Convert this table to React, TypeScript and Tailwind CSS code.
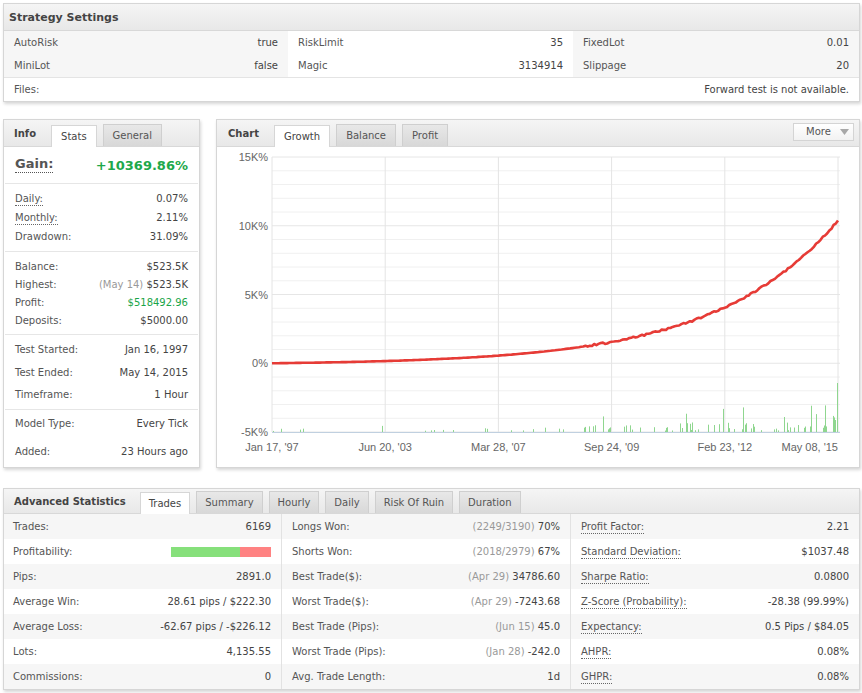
import React from "react";

function lcg(seed: number) {
  let s = seed >>> 0;
  return () => {
    s = (Math.imul(s, 1664525) + 1013904223) >>> 0;
    return s / 4294967296;
  };
}

const PL = 55;
const PR = 621;
const PT = 10;
const PB = 285;
const ZERO = 216.25;
const K = 4.6;

const curve = (() => {
  const pts: string[] = [];
  const n = 260;
  const rnd = lcg(7);
  for (let i = 0; i <= n; i++) {
    const t = i / n;
    const v = (10369 * (Math.exp(K * t) - 1)) / (Math.exp(K) - 1);
    const jitter = t > 0.55 ? (rnd() - 0.5) * 1.8 : 0;
    const y = ZERO - (v * 68.75) / 5000 + jitter;
    const x = PL + t * (PR - PL);
    pts.push(`${x.toFixed(1)},${y.toFixed(1)}`);
  }
  return pts.join(" ");
})();

const bars = (() => {
  const rnd = lcg(12345);
  const out: { x: number; h: number }[] = [];
  for (let x = PL + 1; x < PR; x += 1) {
    const t = (x - PL) / (PR - PL);
    const r = rnd();
    let p = 0.05;
    let maxH = 3;
    if (t > 0.3) {
      p = 0.12;
      maxH = 4;
    }
    if (t > 0.55) {
      p = 0.18;
      maxH = 6;
    }
    if (t > 0.72) {
      p = 0.32;
      maxH = 9;
    }
    if (r < p) {
      let h = 1 + rnd() * maxH;
      const q = rnd();
      if (t > 0.72 && q < 0.2) h = 12 + rnd() * 22;
      else if (t > 0.5 && q < 0.08) h = 6 + rnd() * 10;
      else if (q < 0.04) h = 4 + rnd() * 6;
      out.push({ x, h });
    }
  }
  out.push({ x: PR - 1, h: 49 });
  out.push({ x: PR - 3, h: 12 });
  out.push({ x: PR - 5, h: 11 });
  return out;
})();

function Chart() {
  const vlines = [0, 1, 2, 3, 4, 5].map((k) => PL + k * ((PR - PL) / 5));
  const hlines = Array.from({ length: 21 }, (_, i) => PT + i * 13.75);
  const ylabels = ["15K%", "10K%", "5K%", "0%", "-5K%"];
  const xlabels = ["Jan 17, '97", "Jun 20, '03", "Mar 28, '07", "Sep 24, '09", "Feb 23, '12"];
  return (
    <svg width="642" height="320" viewBox="0 0 642 320" className="block">
      {hlines.map((y, i) => (
        <line key={"h" + i} x1={PL} x2={PR + 2} y1={y} y2={y} stroke={i % 5 === 0 ? "#e6e6e6" : "#f0f0f0"} strokeWidth="1" />
      ))}
      {vlines.map((x, i) => (
        <line key={"v" + i} x1={x} x2={x} y1={PT} y2={PB} stroke="#e4e4e4" strokeWidth="1" />
      ))}
      {bars.map((b, i) => (
        <line key={"b" + i} x1={b.x + 0.5} x2={b.x + 0.5} y1={PB} y2={PB - b.h} stroke="#8fd68f" strokeWidth="1" />
      ))}
      <line x1={PL} x2={PR + 2} y1={PB + 0.5} y2={PB + 0.5} stroke="#c0d0e0" strokeWidth="1" />
      <polyline points={curve} fill="none" stroke="#e63b36" strokeWidth="2.6" strokeLinejoin="round" />
      {ylabels.map((l, i) => (
        <text key={l} x={51} y={PT + i * 68.75 + 4} textAnchor="end" fontFamily="'Liberation Sans', Arial, sans-serif" fontSize="11" fill="#666">
          {l}
        </text>
      ))}
      {xlabels.map((l, i) => (
        <text key={l} x={vlines[i]} y={304} textAnchor="middle" fontFamily="'Liberation Sans', Arial, sans-serif" fontSize="11" fill="#666">
          {l}
        </text>
      ))}
      <text x={PR} y={304} textAnchor="end" fontFamily="'Liberation Sans', Arial, sans-serif" fontSize="11" fill="#666">
        May 08, '15
      </text>
    </svg>
  );
}

function Tab({ label, active }: { label: string; active?: boolean }) {
  return active ? (
    <div className="h-[22px] -mb-px px-[9px] flex items-center bg-white border border-b-0 border-[#d6d6d6] text-[#444]">
      {label}
    </div>
  ) : (
    <div className="h-[22px] px-[9px] flex items-center bg-linear-to-b from-[#e8e8e8] to-[#d8d8d8] border border-b-0 border-[#cfcfcf] text-[#555]">
      {label}
    </div>
  );
}

function BTab({ label, active }: { label: string; active?: boolean }) {
  return active ? (
    <div className="h-[22px] -mb-px px-[8px] flex items-center bg-white border border-b-0 border-[#d6d6d6] text-[#444]">
      {label}
    </div>
  ) : (
    <div className="h-[22px] px-[8px] flex items-center bg-linear-to-b from-[#e8e8e8] to-[#d8d8d8] border border-b-0 border-[#cfcfcf] text-[#555]">
      {label}
    </div>
  );
}

function SRow({ label, value }: { label: string; value: string }) {
  return (
    <div className="h-[23px] flex items-center justify-between px-[10px]">
      <span className="text-[#555]">{label}</span>
      <span className="text-[#444]">{value}</span>
    </div>
  );
}

function Dot({ children }: { children: React.ReactNode }) {
  return <span className="border-b border-dotted border-[#666] pb-[1px]">{children}</span>;
}

type Cell = { label: React.ReactNode; value: React.ReactNode };

const muted = (s: string) => <span className="text-[#999]">{s}</span>;

const statRows: Cell[][] = [
  [
    { label: "Trades:", value: "6169" },
    { label: "Longs Won:", value: <>{muted("(2249/3190)")} 70%</> },
    { label: <Dot>Profit Factor:</Dot>, value: "2.21" },
  ],
  [
    {
      label: "Profitability:",
      value: (
        <span className="flex w-[100px] h-[10px]">
          <span className="w-[69px] bg-[#86e07b]" />
          <span className="flex-1 bg-[#ff8282]" />
        </span>
      ),
    },
    { label: "Shorts Won:", value: <>{muted("(2018/2979)")} 67%</> },
    { label: <Dot>Standard Deviation:</Dot>, value: "$1037.48" },
  ],
  [
    { label: "Pips:", value: "2891.0" },
    { label: "Best Trade($):", value: <>{muted("(Apr 29)")} 34786.60</> },
    { label: <Dot>Sharpe Ratio:</Dot>, value: "0.0800" },
  ],
  [
    { label: "Average Win:", value: "28.61 pips / $222.30" },
    { label: "Worst Trade($):", value: <>{muted("(Apr 29)")} -7243.68</> },
    { label: <Dot>Z-Score (Probability):</Dot>, value: "-28.38 (99.99%)" },
  ],
  [
    { label: "Average Loss:", value: "-62.67 pips / -$226.12" },
    { label: "Best Trade (Pips):", value: <>{muted("(Jun 15)")} 45.0</> },
    { label: <Dot>Expectancy:</Dot>, value: "0.5 Pips / $84.05" },
  ],
  [
    { label: "Lots:", value: "4,135.55" },
    { label: "Worst Trade (Pips):", value: <>{muted("(Jan 28)")} -242.0</> },
    { label: <Dot>AHPR:</Dot>, value: "0.08%" },
  ],
  [
    { label: "Commissions:", value: "0" },
    { label: "Avg. Trade Length:", value: "1d" },
    { label: <Dot>GHPR:</Dot>, value: "0.08%" },
  ],
];

function IRow({ label, value, cls }: { label: React.ReactNode; value: React.ReactNode; cls: string }) {
  return (
    <div className={`flex items-center justify-between ${cls}`}>
      <span className="text-[#555]">{label}</span>
      <span className="text-[#444]">{value}</span>
    </div>
  );
}

export default function App() {
  return (
    <div className="w-[862px] h-[693px] bg-white pt-[3px] pl-[3px] font-['DejaVu_Sans',sans-serif] text-[10px] leading-none">
      {/* Strategy Settings */}
      <div className="w-[857px] border border-[#d6d6d6] bg-white shadow-[1px_2px_3px_rgba(0,0,0,0.16)]">
        <div className="h-[27px] flex items-center px-[5px] bg-linear-to-b from-[#f5f5f5] to-[#e8e8e8] border-b border-[#d8d8d8]">
          <span className="font-bold text-[11px] text-[#444]">Strategy Settings</span>
        </div>
        <div className="grid grid-cols-[284px_285px_1fr]">
          <div className="bg-[#f6f6f6]">
            <SRow label="AutoRisk" value="true" />
            <SRow label="MiniLot" value="false" />
          </div>
          <div className="bg-white">
            <SRow label="RiskLimit" value="35" />
            <SRow label="Magic" value="3134914" />
          </div>
          <div className="bg-[#f6f6f6]">
            <SRow label="FixedLot" value="0.01" />
            <SRow label="Slippage" value="20" />
          </div>
        </div>
        <div className="h-[24px] border-t border-[#e4e4e4] flex items-center justify-between px-[10px]">
          <span className="text-[#555]">Files:</span>
          <span className="text-[#444]">Forward test is not available.</span>
        </div>
      </div>

      {/* Middle */}
      <div className="flex gap-[16px] mt-[17px] w-[857px]">
        {/* Info */}
        <div className="w-[197px] h-[349px] border border-[#d6d6d6] bg-white shadow-[1px_2px_3px_rgba(0,0,0,0.16)]">
          <div className="h-[27px] flex items-end pl-[10px] gap-[6px] bg-linear-to-b from-[#f5f5f5] to-[#e8e8e8] border-b border-[#d8d8d8]">
            <span className="self-center font-bold text-[#444] mr-[9px] mt-[2px]">Info</span>
            <Tab label="Stats" active />
            <Tab label="General" />
          </div>
          <div className="mx-[1px]">
            <div className="h-[37px] flex items-center justify-between px-[10px] border-b border-[#e6e6e6]">
              <span className="font-bold text-[13px] text-[#555] border-b border-dotted border-[#555] pb-[2px]">Gain:</span>
              <span className="font-bold text-[13px] text-[#1ea84b]">+10369.86%</span>
            </div>
            <div className="px-[10px] pt-[5px] pb-[5px] border-b border-[#e6e6e6]">
              <IRow cls="h-[19px]" label={<Dot>Daily:</Dot>} value="0.07%" />
              <IRow cls="h-[19px]" label={<Dot>Monthly:</Dot>} value="2.11%" />
              <IRow cls="h-[19px]" label="Drawdown:" value="31.09%" />
            </div>
            <div className="px-[10px] pt-[6px] pb-[4px] border-b border-[#e6e6e6]">
              <IRow cls="h-[18px]" label="Balance:" value="$523.5K" />
              <IRow cls="h-[18px]" label="Highest:" value={<>{muted("(May 14)")} $523.5K</>} />
              <IRow cls="h-[18px]" label="Profit:" value={<span className="text-[#1aa548]">$518492.96</span>} />
              <IRow cls="h-[18px]" label="Deposits:" value="$5000.00" />
            </div>
            <div className="px-[10px] pt-[4px] pb-[2px] border-b border-[#e6e6e6]">
              <IRow cls="h-[22.5px]" label="Test Started:" value="Jan 16, 1997" />
              <IRow cls="h-[22.5px]" label="Test Ended:" value="May 14, 2015" />
              <IRow cls="h-[22.5px]" label="Timeframe:" value="1 Hour" />
            </div>
            <div className="px-[10px]">
              <IRow cls="h-[28px]" label="Model Type:" value="Every Tick" />
              <IRow cls="h-[28px]" label="Added:" value="23 Hours ago" />
            </div>
          </div>
        </div>

        {/* Chart */}
        <div className="flex-1 h-[349px] border border-[#d6d6d6] bg-white shadow-[1px_2px_3px_rgba(0,0,0,0.16)]">
          <div className="h-[27px] flex items-end pl-[11px] gap-[6px] bg-linear-to-b from-[#f5f5f5] to-[#e8e8e8] border-b border-[#d8d8d8]">
            <span className="self-center font-bold text-[#444] mr-[9px] mt-[2px]">Chart</span>
            <Tab label="Growth" active />
            <Tab label="Balance" />
            <Tab label="Profit" />
            <div className="ml-auto self-start mt-[3px] mr-[5px] w-[61px] h-[18px] flex items-center justify-between pl-[12px] pr-[4px] border border-[#d4d4d4] bg-linear-to-b from-white to-[#f2f2f2] text-[#555]">
              <span>More</span>
              <svg width="9" height="6" viewBox="0 0 9 6">
                <path d="M0 0 H9 L4.5 6 Z" fill="#a8a8a8" />
              </svg>
            </div>
          </div>
          <Chart />
        </div>
      </div>

      {/* Advanced Statistics */}
      <div className="w-[857px] mt-[20px] border border-[#d6d6d6] bg-white shadow-[1px_2px_3px_rgba(0,0,0,0.16)]">
        <div className="h-[25px] flex items-end pl-[10px] gap-[6px] bg-linear-to-b from-[#f5f5f5] to-[#e8e8e8] border-b border-[#d8d8d8]">
          <span className="self-center font-bold text-[#444] mr-[8px] mt-[1px]">Advanced Statistics</span>
          <BTab label="Trades" active />
          <BTab label="Summary" />
          <BTab label="Hourly" />
          <BTab label="Daily" />
          <BTab label="Risk Of Ruin" />
          <BTab label="Duration" />
        </div>
        {statRows.map((row, ri) => (
          <div key={ri} className={`grid grid-cols-[277px_289px_1fr] h-[25px] ${ri % 2 === 0 ? "bg-[#f6f6f6]" : "bg-white"}`}>
            {row.map((c, ci) => (
              <div
                key={ci}
                className={`flex items-center justify-between pl-[9px] pr-[10px] ${ci > 0 ? "border-l border-[#e2e2e2] pl-[10px]" : ""}`}
              >
                <span className="text-[#555]">{c.label}</span>
                <span className="text-[#444]">{c.value}</span>
              </div>
            ))}
          </div>
        ))}
      </div>
    </div>
  );
}
